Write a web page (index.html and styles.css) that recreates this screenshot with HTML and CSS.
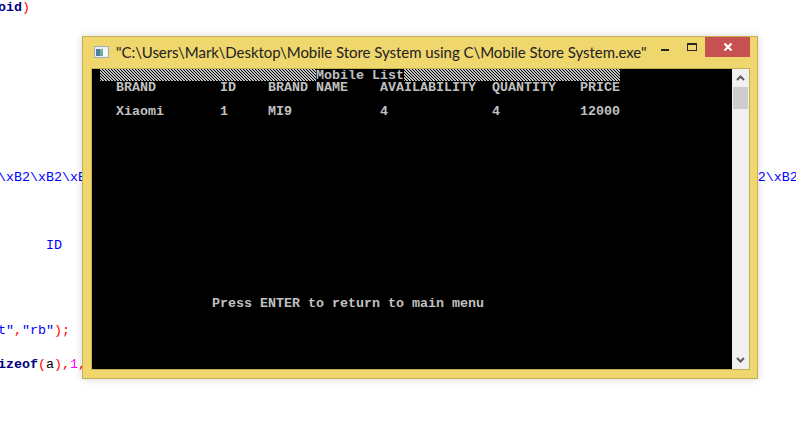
FILE: index.html
```html
<!DOCTYPE html>
<html lang="en">
<head>
<meta charset="utf-8">
<title>Mobile Store System</title>
<link rel="stylesheet" href="styles.css">
</head>
<body>
<pre class="code"><span class="kw">oid</span><span class="op">)</span>









<span class="str">\xB2\xB2\xB2\xB2\xB2\xB2\xB2\xB2\xB2\xB2\xB2\xB2\xB2\xB2\xB2\xB2\xB2\xB2\xB2\xB2\xB2\xB2\xB2\xB2\xB2</span>



<span class="str">      ID</span>




<span class="str">t"</span><span class="op">,</span><span class="str">"rb"</span><span class="op">);</span>

<span class="kw">izeof</span><span class="op">(</span>a<span class="op">),</span><span class="num">1</span><span class="op">,</span></pre>

<section class="window">
  <header class="titlebar">
    <svg class="appicon" width="15" height="12" viewBox="0 0 15 12" aria-hidden="true">
      <rect x="0.5" y="0.5" width="14" height="11" fill="#eef1f4" stroke="#9fb0bc"/>
      <rect x="2" y="3" width="4" height="7" fill="#4c7fa8"/>
      <rect x="6" y="3" width="3" height="7" fill="#6fb09a"/>
      <rect x="9" y="3" width="4" height="7" fill="#fbfbfb"/>
    </svg>
    <span class="title">"C:\Users\Mark\Desktop\Mobile Store System using C\Mobile Store System.exe"</span>
    <span class="controls">
      <span class="minimize"></span>
      <span class="maximize"></span>
      <span class="close">
        <svg width="10" height="10" viewBox="0 0 10 10" aria-hidden="true"><path d="M1.5 1.5l7 7M8.5 1.5l-7 7" stroke="#fff" stroke-width="2.2" fill="none"/></svg>
      </span>
    </span>
  </header>
  <div class="client">
<pre class="console"> <span class="hatch"></span>Mobile List<span class="hatch"></span>
   BRAND        ID    BRAND NAME    AVAILABILITY  QUANTITY   PRICE

   Xiaomi       1     MI9           4             4          12000















               Press ENTER to return to main menu</pre>
    <div class="scrollbar">
      <svg class="arrow" width="9" height="6" viewBox="0 0 9 6" aria-hidden="true"><path d="M1 5l3.5-3.5L8 5" fill="none" stroke="#5a5a5a" stroke-width="2"/></svg>
      <div class="thumb"></div>
      <div class="track"></div>
      <svg class="arrow" width="9" height="6" viewBox="0 0 9 6" aria-hidden="true"><path d="M1 1l3.5 3.5L8 1" fill="none" stroke="#5a5a5a" stroke-width="2"/></svg>
    </div>
  </div>
</section>
</body>
</html>
```
FILE: styles.css
```css
html, body {
  margin: 0;
  width: 796px;
  height: 445px;
  overflow: hidden;
  background: #fff;
}
.code {
  margin: -1px 0 0 -2px;
  font: 13.33px/17px "Liberation Mono", monospace;
  font-weight: 400;
  color: #000;
  white-space: pre;
}
.kw { color: #000080; font-weight: 700; }
.str { color: #0000ff; }
.op { color: #ff0000; font-weight: 400; }
.num { color: #ff00ff; }
.window {
  position: absolute;
  left: 82px;
  top: 36px;
  width: 676px;
  height: 343px;
  box-sizing: border-box;
  background: #efd66d;
  border: 1px solid #c4ae56;
  box-shadow: 0 0 8px rgba(0, 0, 0, 0.16);
  padding: 0 7px 8px 8px;
  display: flex;
  flex-direction: column;
}
.titlebar {
  height: 31px;
  flex: none;
  display: flex;
  align-items: flex-start;
}
.appicon {
  flex: none;
  margin: 9px 0 0 3px;
}
.title {
  margin: 4px 0 0 7px;
  font: 15px/22px Lato, sans-serif;
  letter-spacing: -0.04px;
  color: #222;
  white-space: nowrap;
}
.controls {
  margin-left: auto;
  display: flex;
  align-items: flex-start;
}
.minimize {
  width: 8px;
  height: 2px;
  margin: 12px 0 0;
  background: #262626;
}
.maximize {
  width: 8px;
  height: 5px;
  margin: 6px 0 0 18px;
  border: 1px solid #262626;
  border-top-width: 2px;
}
.close {
  width: 45px;
  height: 20px;
  margin-left: 8px;
  background: #c75050;
  display: flex;
  align-items: center;
  justify-content: center;
}
.client {
  flex: 1;
  min-height: 0;
  display: flex;
  border: 1px solid #c4ae56;
}
.console {
  flex: 1;
  margin: 0;
  padding-top: 1px;
  background: #000;
  color: #c0c0c0;
  font: 700 13.33px/12px "Liberation Mono", monospace;
  overflow: hidden;
}
.hatch {
  display: inline-block;
  width: 216px;
  height: 12px;
  margin-top: -1px;
  vertical-align: top;
  background: #000 url("data:image/svg+xml,%3Csvg xmlns='http://www.w3.org/2000/svg' width='3' height='3' shape-rendering='crispEdges'%3E%3Cpath fill='%23c0c0c0' d='M0 0h2v1H0zM1 1h2v1H1zM2 2h1v1H2zM0 2h1v1H0z'/%3E%3C/svg%3E") 0 0 / 3px 3px;
}
.scrollbar {
  width: 17px;
  flex: none;
  background: #f0f0f0;
  display: flex;
  flex-direction: column;
  align-items: center;
}
.arrow { flex: none; margin: 6px 0; }
.thumb {
  width: 15px;
  height: 22px;
  flex: none;
  background: #cdcdcd;
}
.track { flex: 1; }
```
